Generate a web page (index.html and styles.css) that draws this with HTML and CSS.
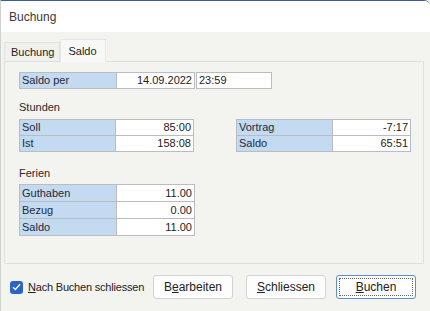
FILE: index.html
```html
<!DOCTYPE html>
<html>
<head>
<meta charset="utf-8">
<link rel="stylesheet" href="styles.css">
</head>
<body>
<div class="window">
  <div class="titlebar">Buchung</div>
  <div class="client">
    <div class="tabs">
      <div class="tab">Buchung</div>
      <div class="tab active">Saldo</div>
    </div>
    <div class="panel">
      <div class="row-per">
        <table class="grid">
          <tr><td class="lbl">Saldo per</td><td class="val">14.09.2022</td></tr>
        </table>
        <div class="timebox">23:59</div>
      </div>
      <div class="section-title">Stunden</div>
      <div class="pair">
        <table class="grid">
          <tr><td class="lbl">Soll</td><td class="val">85:00</td></tr>
          <tr><td class="lbl">Ist</td><td class="val">158:08</td></tr>
        </table>
        <table class="grid">
          <tr><td class="lbl">Vortrag</td><td class="val">-7:17</td></tr>
          <tr><td class="lbl">Saldo</td><td class="val">65:51</td></tr>
        </table>
      </div>
      <div class="section-title ferien">Ferien</div>
      <table class="grid tall">
        <tr><td class="lbl">Guthaben</td><td class="val">11.00</td></tr>
        <tr><td class="lbl">Bezug</td><td class="val">0.00</td></tr>
        <tr><td class="lbl">Saldo</td><td class="val">11.00</td></tr>
      </table>
    </div>
    <div class="footer">
      <label class="check">
        <span class="box"><svg width="9" height="8" viewBox="0 0 9 8"><path d="M1 4.2 L3.4 6.5 L8 1.3" fill="none" stroke="#fff" stroke-width="1.3"/></svg></span>
        <span class="check-text"><u>N</u>ach Buchen schliessen</span>
      </label>
      <div class="buttons">
        <button class="btn edit">B<u>e</u>arbeiten</button>
        <button class="btn close"><u>S</u>chliessen</button>
        <button class="btn default"><span class="focus"><u>B</u>uchen</span></button>
      </div>
    </div>
  </div>
</div>
</body>
</html>
```
FILE: styles.css
```css
html, body {
  margin: 0;
  padding: 0;
  background: #f3f3f0;
  font-family: "Liberation Sans", Arial, sans-serif;
  font-size: 11px;
  color: #222;
}
.window {
  width: 430px;
  height: 311px;
  box-sizing: border-box;
  border-top: 1px solid #3b5f95;
  border-left: 1px solid #d0d0d0;
  border-top-right-radius: 6px;
  background: #f3f3f0;
  display: flex;
  flex-direction: column;
  overflow: hidden;
}
.titlebar {
  height: 31px;
  background: #ffffff;
  font-size: 12px;
  color: #3a3a3a;
  padding-left: 8px;
  line-height: 32px;
  flex: none;
}
.client {
  flex: 1;
  display: flex;
  flex-direction: column;
  padding: 6px 6px 0 3px;
}
.tabs {
  display: flex;
  align-items: flex-end;
  height: 23px;
}
.tab {
  height: 18px;
  line-height: 18px;
  padding: 0 5px 0 6px;
  font-size: 11px;
  color: #222;
  border: 1px solid #e2e2de;
  border-bottom: none;
  background: #f0f0ec;
}
.tab.active {
  height: 22px;
  line-height: 22px;
  background: #f8f8f6;
  padding: 0 8px 0 7px;
  margin-bottom: -1px;
  position: relative;
  z-index: 1;
  border-color: #e6e6e2;
}
.panel {
  height: 203px;
  box-sizing: border-box;
  border: 1px solid #e0e0dc;
  background: #f3f3f0;
  padding: 10px 12px 0 14px;
  display: flex;
  flex-direction: column;
  align-items: flex-start;
}
.grid {
  border-collapse: collapse;
  font-size: 11px;
}
.grid td {
  border: 1px solid #b9bdc3;
  height: 15px;
  padding: 0 2px;
  line-height: 15px;
}
.grid.tall td {
  height: 16px;
  line-height: 16px;
}
.grid .lbl {
  background: #c3daf1;
  width: 92px;
  color: #1e2a3a;
}
.grid .val {
  background: #ffffff;
  width: 73px;
  text-align: right;
}
.row-per {
  display: flex;
  gap: 1px;
}
.timebox {
  width: 70px;
  height: 15px;
  line-height: 15px;
  padding: 0 2px;
  border: 1px solid #b9bdc3;
  background: #fff;
}
.section-title {
  margin-top: 12px;
  margin-bottom: 6px;
  color: #2a2a2a;
}
.section-title.ferien {
  margin-top: 15px;
  margin-bottom: 5px;
}
.pair {
  display: flex;
  gap: 42px;
}
.footer {
  display: flex;
  align-items: center;
  justify-content: space-between;
  height: 46px;
  padding-left: 6px;
  padding-right: 8px;
}
.check {
  display: flex;
  align-items: center;
  gap: 5px;
  font-size: 11px;
  color: #222;
  white-space: nowrap;
  letter-spacing: -0.2px;
}
.check .box {
  width: 13px;
  height: 13px;
  border-radius: 3px;
  background: #2b63c6;
  display: flex;
  align-items: center;
  justify-content: center;
  flex: none;
}
.buttons {
  display: flex;
}
.btn {
  width: 80px;
  height: 24px;
  box-sizing: border-box;
  border: 1px solid #d3d3d3;
  border-radius: 3px;
  background: #fdfdfd;
  font-family: "Liberation Sans", Arial, sans-serif;
  font-size: 12px;
  color: #222;
  padding: 0;
}
.btn.edit {
  margin-right: 13px;
}
.btn.close {
  margin-right: 10px;
}
.btn.default {
  border: 1px solid #5b8fd6;
  padding: 2px;
}
.btn .focus {
  display: flex;
  align-items: center;
  justify-content: center;
  height: 100%;
  border: 1px dotted #666;
  box-sizing: border-box;
}
```
